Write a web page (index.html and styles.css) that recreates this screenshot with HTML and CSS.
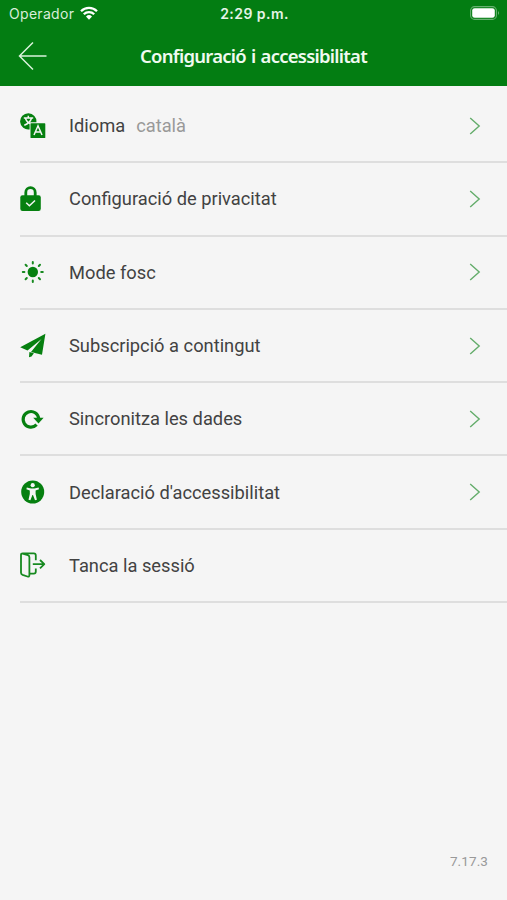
FILE: index.html
```html
<!DOCTYPE html>
<html lang="ca">
<head>
    <meta charset="UTF-8">
    <meta name="viewport" content="width=device-width, initial-scale=1.0">
    <title>Configuració i accessibilitat</title>
    <link rel="stylesheet" href="styles.css">
</head>
<body>
    <div class="app">
        <header class="header">
            <div class="status-bar">
                <div class="carrier">
                    <span>Operador</span>
                    <svg class="wifi" viewBox="0 0 18 14">
                        <path d="M1 5.2a11.4 11.4 0 0 1 16 0M3.8 8.2a7.4 7.4 0 0 1 10.4 0" fill="none" stroke="#fff" stroke-width="2.3"/>
                        <path d="M9 13.7l-3-3.2a4.3 4.3 0 0 1 6 0z" fill="#fff"/>
                    </svg>
                </div>
                <span class="time">2:29 p.m.</span>
                <svg class="battery" viewBox="0 0 30 14">
                    <rect x=".6" y=".6" width="25.8" height="12.8" rx="4" fill="none" stroke="#fff" stroke-opacity=".4" stroke-width="1.1"/>
                    <rect x="2.2" y="2.2" width="22.6" height="9.6" rx="2.4" fill="#fff"/>
                    <path d="M28 4.8q1.8 2.2 0 4.4z" fill="#fff" fill-opacity=".5"/>
                </svg>
            </div>
            <div class="nav-bar">
                <a class="back" href="#" aria-label="Enrere">
                    <svg viewBox="0 0 30 30"><path d="M28.5 15H1.5M15 1.5L1.5 15 15 28.5"/></svg>
                </a>
                <h1 class="title">Configuració i accessibilitat</h1>
            </div>
        </header>

        <main class="list">
            <div class="row">
                <svg class="icon" viewBox="0 0 26 26">
                    <path d="M8.4.2a8.2 8.2 0 1 0 1.2 16.3V9.2h6.8A8.2 8.2 0 0 0 8.4.2z"/>
                    <path class="cut" d="M3.8 5h9.4M8.3 2.8V5M5.4 5.2q1.6 4.6 6.3 6.2M11.5 5.2q-1.5 4.8-7.2 7"/>
                    <rect x="10.5" y="10.3" width="14.8" height="14.8" rx=".6"/>
                    <path class="cut" d="M14 22l4-9.2 4 9.2M15.3 18.9h5.4"/>
                </svg>
                <span class="label">Idioma</span>
                <span class="value">català</span>
                <svg class="chevron" viewBox="0 0 12 18"><path d="M1.2 1l9 8-9 8"/></svg>
            </div>
            <div class="row">
                <svg class="icon" viewBox="0 0 26 26">
                    <path d="M5.8 11V6.4a4.7 4.7 0 0 1 9.4 0V11" fill="none" stroke="#068010" stroke-width="2.8"/>
                    <rect x=".3" y="9.2" width="20.5" height="15.8" rx="2.2"/>
                    <path class="cut" d="M6.2 16.8l3.2 3 5.6-5.3"/>
                </svg>
                <span class="label">Configuració de privacitat</span>
                <svg class="chevron" viewBox="0 0 12 18"><path d="M1.2 1l9 8-9 8"/></svg>
            </div>
            <div class="row">
                <svg class="icon" viewBox="0 0 26 26">
                    <circle cx="12.8" cy="13" r="5.2"/>
                    <path class="line rays" d="M12.8 4.6V3M12.8 21.4V23M4.4 13H2.8M21.2 13h1.6M6.8 7L5.6 5.8M18.8 19l1.2 1.2M6.8 19l-1.2 1.2M18.8 7L20 5.8"/>
                </svg>
                <span class="label">Mode fosc</span>
                <svg class="chevron" viewBox="0 0 12 18"><path d="M1.2 1l9 8-9 8"/></svg>
            </div>
            <div class="row">
                <svg class="icon" viewBox="0 0 26 26">
                    <path d="M25.4.8L.2 14.2l7.3 3.4L21.5 6 11 19l11 2.7zM9.4 19.1L9 24.2l2.5-.6 2.4-3.4z"/>
                </svg>
                <span class="label">Subscripció a contingut</span>
                <svg class="chevron" viewBox="0 0 12 18"><path d="M1.2 1l9 8-9 8"/></svg>
            </div>
            <div class="row">
                <svg class="icon" viewBox="0 0 26 26">
                    <path d="M16.6 18.7A7.8 7.8 0 1 1 18.7 12.6" fill="none" stroke="#068010" stroke-width="3.2"/>
                    <path d="M13.2 11.8h10.4l-5.1 5.6z"/>
                </svg>
                <span class="label">Sincronitza les dades</span>
                <svg class="chevron" viewBox="0 0 12 18"><path d="M1.2 1l9 8-9 8"/></svg>
            </div>
            <div class="row">
                <svg class="icon" viewBox="0 0 26 26">
                    <circle cx="12.7" cy="13" r="11.5"/>
                    <circle cx="12.7" cy="6.2" r="2.1" fill="#f5f5f5"/>
                    <path d="M6.8 8.5l4.2 1h3.4l4.2-1 .4 1.7-3.4 1.3v3.4l1.3 5.8-1.9.6-2-5.4h-.6l-2 5.4-1.9-.6 1.3-5.8v-3.4L6.4 10.2z" fill="#f5f5f5"/>
                </svg>
                <span class="label">Declaració d'accessibilitat</span>
                <svg class="chevron" viewBox="0 0 12 18"><path d="M1.2 1l9 8-9 8"/></svg>
            </div>
            <div class="row">
                <svg class="icon" viewBox="0 0 26 26">
                    <path class="line" d="M2.6 1.6l5.2 1.6q1.6.5 1.6 2.1V23q0 2.2-2 1.5l-4.8-1.6Q1 22.3 1 20.7V3q0-1.7 1.7-1.7h11.1q2 0 2 2.1v4.8M15.8 16.4v3.2q0 2.1-2 2.1H9.6M12.8 12.2H24M20 8l4.3 4.2-4.3 4.2"/>
                </svg>
                <span class="label">Tanca la sessió</span>
            </div>
        </main>

        <footer class="version">7.17.3</footer>
    </div>
</body>
</html>
```
FILE: styles.css
```css
body {
    margin: 0;
    background: #f5f5f5;
    font-family: Roboto, sans-serif;
    color: #424242;
}
.app {
    display: flex;
    flex-direction: column;
    height: 900px;
}
.header {
    height: 86px;
    background: #037d12;
    color: #fff;
}
.status-bar {
    display: grid;
    grid-template-columns: 1fr auto 1fr;
    align-items: center;
    height: 27px;
    padding: 0 7px 0 9px;
    font-family: Inter, sans-serif;
    font-size: 14px;
}
.carrier {
    display: flex;
    align-items: center;
    gap: 6px;
    color: #d9edda;
    letter-spacing: 0.3px;
}
.wifi {
    width: 18px;
    height: 14px;
    margin-top: -2px;
}
.time {
    font-weight: 600;
    letter-spacing: 0.45px;
    color: #e6f4e7;
}
.battery {
    width: 30px;
    height: 14px;
    margin-top: -1px;
    justify-self: end;
}
.nav-bar {
    display: grid;
    grid-template-columns: 50px 1fr 50px;
    align-items: center;
    height: 58px;
}
.back {
    display: flex;
    padding-left: 18px;
}
.back svg {
    width: 30px;
    height: 30px;
    fill: none;
    stroke: #d9f2dc;
    stroke-width: 1.5;
}
.title {
    margin: 0 0 2px;
    font-family: "Noto Sans", sans-serif;
    font-size: 18.5px;
    font-weight: 600;
    letter-spacing: -0.75px;
    word-spacing: 1px;
    text-align: center;
    white-space: nowrap;
    color: #f0faf0;
}
.list {
    flex: 1;
    padding: 4px 0 0 20px;
}
.row {
    display: flex;
    align-items: center;
    box-sizing: border-box;
    height: 73.3px;
    padding-right: 26px;
    border-bottom: 2px solid #dedede;
    font-size: 18.3px;
}
.row:last-child {
    height: 73px;
}
.icon {
    width: 26px;
    height: 26px;
    margin-right: 23px;
    fill: #068010;
}
.icon .cut {
    fill: none;
    stroke: #f5f5f5;
    stroke-width: 1.5;
}
.icon .line {
    fill: none;
    stroke: #178a20;
    stroke-width: 1.8;
    stroke-linejoin: round;
}
.icon .rays {
    stroke-width: 2;
    stroke-linecap: round;
}
.value {
    margin-left: 11px;
    color: #999;
}
.chevron {
    width: 12px;
    height: 18px;
    margin-left: auto;
    fill: none;
    stroke: #63ac6a;
    stroke-width: 1.4;
}
.version {
    padding: 0 19px 31px 0;
    font-size: 13.5px;
    line-height: 16px;
    text-align: right;
    letter-spacing: 0.1px;
    color: #999;
}
```
